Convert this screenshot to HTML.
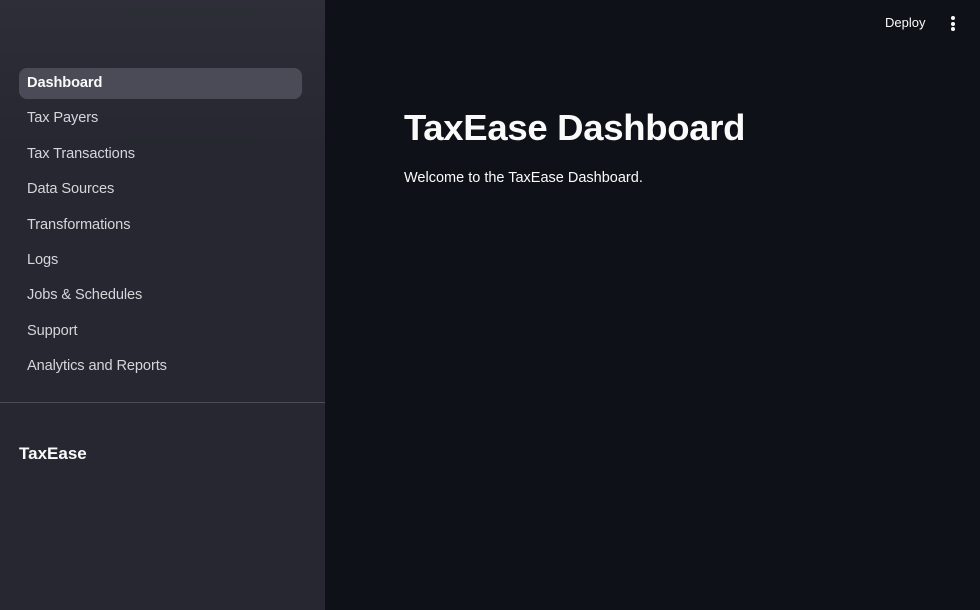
<!DOCTYPE html>
<html><head><style>
html,body{margin:0;padding:0;width:980px;height:610px;overflow:hidden;background:#0e1117;font-family:"Liberation Sans",sans-serif;color:#fafafa}
.sb{position:absolute;left:0;top:0;width:325px;height:610px;background:linear-gradient(180deg,#2d2e37 0%,#262730 25%,#262730 100%)}
.nav{position:absolute;left:19px;top:68px;width:283px}
.it{height:31px;line-height:31px;padding-left:8px;font-size:14.6px;color:#d5d6da;margin-bottom:4.4px;border-radius:8px;letter-spacing:-0.1px}
.it.a{background:#4a4b56;color:#fafafa;font-weight:bold}
.hr{position:absolute;left:0;top:402px;width:325px;height:1px;background:#4b4c56}
.brand{position:absolute;left:19px;top:444px;font-size:17px;font-weight:bold;color:#fafafa}
h1{position:absolute;left:404px;top:107px;margin:0;font-size:36.5px;font-weight:bold;letter-spacing:-0.3px}
.p{position:absolute;left:404px;top:170px;font-size:14.5px;color:#fafafa}
.dep{position:absolute;left:885px;top:15px;font-size:13px}
.dots{position:absolute;left:951px;top:16px}
.dots i{display:block;width:4px;height:4px;border-radius:2px;background:#fafafa;margin-bottom:1.5px}
</style></head><body>
<div class="sb">
<div class="nav">
<div class="it a">Dashboard</div>
<div class="it">Tax Payers</div>
<div class="it">Tax Transactions</div>
<div class="it">Data Sources</div>
<div class="it">Transformations</div>
<div class="it">Logs</div>
<div class="it">Jobs &amp; Schedules</div>
<div class="it">Support</div>
<div class="it">Analytics and Reports</div>
</div>
<div class="hr"></div>
<div class="brand">TaxEase</div>
</div>
<h1>TaxEase Dashboard</h1>
<div class="p">Welcome to the TaxEase Dashboard.</div>
<div class="dep">Deploy</div>
<div class="dots"><i></i><i></i><i></i></div>
</body></html>
